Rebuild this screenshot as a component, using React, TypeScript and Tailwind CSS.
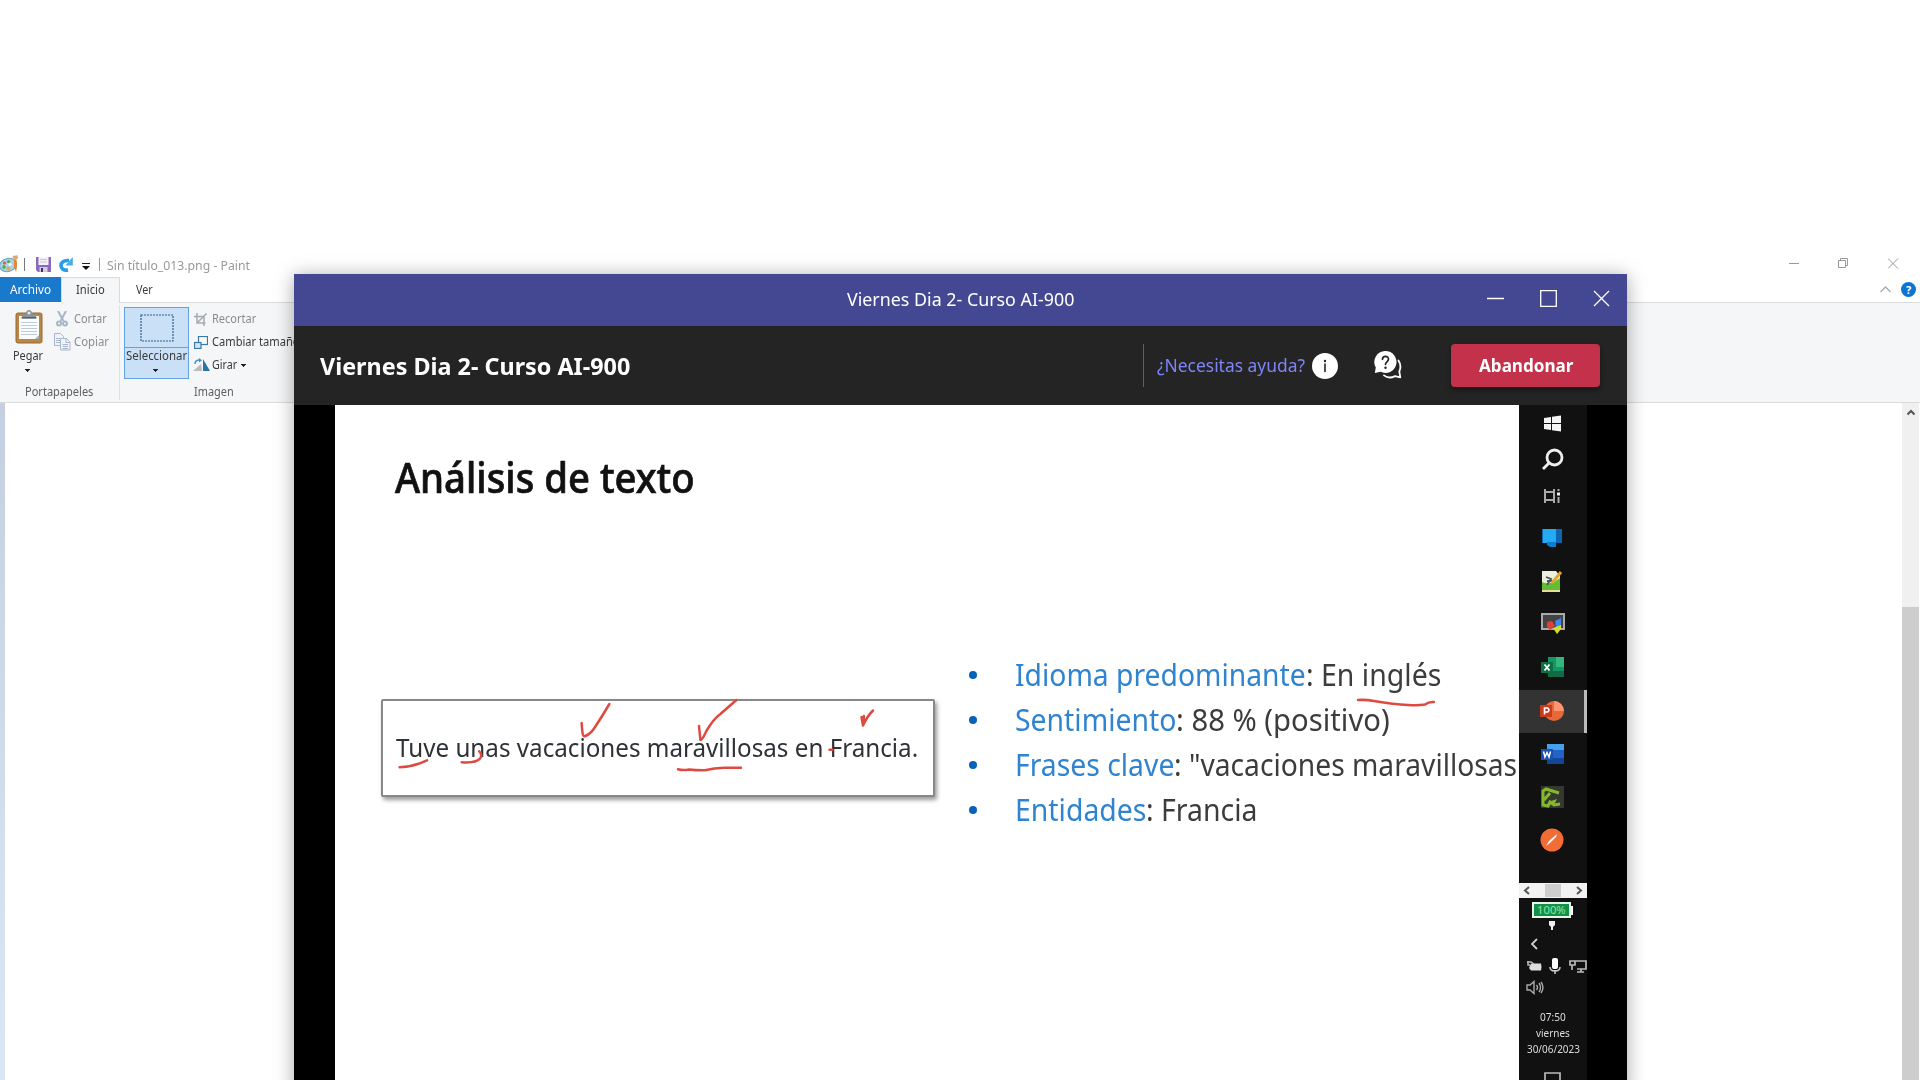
import { useLayoutEffect, useRef, useState, type ReactNode } from "react";

/** One line of text condensed or widened so that it fills `width` pixels. */
function Fit({ width, className = "", children }: { width: number; className?: string; children: ReactNode }) {
  const ref = useRef<HTMLSpanElement>(null);
  const [scale, setScale] = useState(1);
  useLayoutEffect(() => {
    if (ref.current && ref.current.offsetWidth) setScale(width / ref.current.offsetWidth);
  }, [width]);
  return (
    <span className={`block shrink-0 whitespace-nowrap ${className}`} style={{ width }}>
      <span ref={ref} className="inline-block origin-left whitespace-pre" style={{ transform: `scaleX(${scale})` }}>
        {children}
      </span>
    </span>
  );
}

const Caret = ({ className = "" }: { className?: string }) => (
  <svg className={`shrink-0 ${className}`} width="5" height="3" viewBox="0 0 5 3" shapeRendering="crispEdges">
    <path d="M0 0h5L2.5 3z" fill="#222" />
  </svg>
);

const PaintLogo = () => (
  <svg width="19" height="18" viewBox="0 0 19 18">
    <ellipse cx="8" cy="10" rx="8.5" ry="6.5" fill="#a9d3ea" stroke="#6d9fbd" transform="rotate(-15 8 10)" />
    <circle cx="4" cy="12" r="1.8" fill="#4cae3f" />
    <circle cx="4.500" cy="8" r="1.600" fill="#e7574a" />
    <circle cx="8.500" cy="6.500" r="1.600" fill="#4cae3f" />
    <circle cx="8.500" cy="13.500" r="1.900" fill="#f2a737" />
    <circle cx="10" cy="9.500" r="1.600" fill="#fff" />
    <path d="M14 5l2.500-.5.5 7-1 5.500-2-5z" fill="#e8862c" />
    <path d="M12.500 1l5-.8.5 3.300-4 2z" fill="#d8a878" />
  </svg>
);

const SaveIcon = () => (
  <svg width="15" height="15" viewBox="0 0 15 15">
    <path d="M0 0h15v15H2l-2-2z" fill="#8a68bd" />
    <rect x="2.500" y="0" width="10" height="8" fill="#f3f1f8" />
    <path d="M4 2.500h7M4 5h7" stroke="#cbc5d8" />
    <rect x="3.500" y="10" width="8" height="5" fill="#cfcbe0" />
    <rect x="5" y="11" width="2" height="4" fill="#443060" />
  </svg>
);

const UndoIcon = () => (
  <svg width="14" height="15" viewBox="0 0 14 15">
    <path d="M9 13C4.500 13.800 2 11.500 2 8.500s2.500-5.500 8-5" fill="none" stroke="#2b9be3" strokeWidth="3.600" />
    <path d="M13.800 0v8.500H6.500l2.300-2.700L11 3z" fill="#46aeee" />
  </svg>
);

const Clipboard = () => (
  <svg width="28" height="34" viewBox="0 0 28 34">
    <rect x="1" y="3" width="26" height="30" rx="2" fill="#b98647" stroke="#99692f" />
    <rect x="4" y="6" width="20" height="23" fill="#fbfcfd" />
    <path d="M6 12.500h16M6 15.500h16M6 18.500h16M6 21.500h16M6 24.500h16" stroke="#bccbd8" />
    <path d="M20 29l4-4v4z" fill="#a5b3bd" />
    <path d="M7 8.500V5l4-1.500C11 1 12.500 0 14 0s3 1 3 3.500L21 5v3.500z" fill="#8b939a" />
    <path d="M6.500 7h15v1.500h-15z" fill="#5a6269" />
    <circle cx="14" cy="3" r="1.500" fill="#e9edf0" />
  </svg>
);

const Scissors = () => (
  <svg width="12" height="16" viewBox="0 0 12 16" fill="none" stroke="#a9b6c8" strokeWidth="2">
    <path d="M2 0l5.500 10M10 0L4.500 10" />
    <circle cx="3" cy="12.500" r="2" />
    <circle cx="9" cy="12.500" r="2" />
  </svg>
);

const CopyIcon = () => (
  <svg width="17" height="18" viewBox="0 0 17 18" fill="#f0f3f8" stroke="#a8b7cd">
    <path d="M.5.500h6l3 3v9h-9z" />
    <path d="M2 5.500h4M2 7.500h4M2 9.500h4" />
    <path d="M6.500 5.500h6l3.500 3.500v8H6.500z" />
    <path d="M12 5.500v4h4M8.500 11.500h5.500M8.500 13.500h5.500M8.500 15.500h5.500" />
  </svg>
);

const CropIcon = () => (
  <svg width="14" height="13" viewBox="0 0 14 13" fill="none" stroke="#a5abb2" strokeWidth="1.500">
    <path d="M3 0v10h8.500M0 3.500h10V13M3 10L12.500.5" />
  </svg>
);

const ResizeIcon = () => (
  <svg width="14" height="13" viewBox="0 0 14 13" stroke="#3a78a5">
    <rect x="4.500" y=".5" width="9" height="8" fill="#f6fafd" strokeWidth="1.200" />
    <rect x=".5" y="6.500" width="6.500" height="6" fill="#d0e5f4" strokeWidth="1.200" />
  </svg>
);

const RotateIcon = () => (
  <svg width="17" height="14" viewBox="0 0 17 14">
    <path d="M9 13L0 13 8 6z" fill="#b9bdc1" />
    <path d="M10 1l7 12h-7z" fill="#2576aa" />
    <path d="M2 6C2 3 4 1.800 6.500 2" fill="none" stroke="#3a95d8" strokeWidth="1.500" />
    <path d="M6 0l3 2.200L6 4.500z" fill="#3a95d8" />
  </svg>
);

function Ribbon() {
  return (
    <div className="flex h-[100px] border-b border-[#dadbdc] bg-[#f5f6f7] text-[12px] leading-4 text-[#3b3b3b]">
      <div className="my-[2px] flex w-[120px] shrink-0 flex-col border-r border-[#dfe1e3]">
        <div className="flex h-[74px]">
          <div className="flex w-[54px] flex-col pl-[13px] pt-[5px]">
            <span className="ml-[2px]"><Clipboard /></span>
            <Fit width={30} className="mt-[4px]">Pegar</Fit>
            <Caret className="ml-[12px] mt-[5px]" />
          </div>
          <div className="flex flex-col pt-[6px] text-[#8d8d8d]">
            <div className="flex h-[16px] items-center">
              <span className="ml-[2px] w-[18px]"><Scissors /></span>
              <Fit width={33}>Cortar</Fit>
            </div>
            <div className="mt-[7px] flex h-[16px] items-center">
              <span className="w-[20px]"><CopyIcon /></span>
              <Fit width={35}>Copiar</Fit>
            </div>
          </div>
        </div>
        <Fit width={68} className="ml-[25px] mt-[5px] text-[#5f5f5f]">Portapapeles</Fit>
      </div>
      <div className="flex flex-1 flex-col pl-[4px] pt-[4px]">
        <div className="flex h-[72px]">
          <div className="flex h-[72px] w-[65px] flex-col border border-[#62a2e4] bg-[#c9e0f7]">
            <div className="flex h-[40px] items-center justify-center border-b border-[#62a2e4]">
              <svg width="34" height="28" viewBox="0 0 34 28">
                <rect x="1" y="1" width="32" height="26" fill="none" stroke="#2b5f8c" strokeDasharray="2 1" strokeWidth="1.200" />
              </svg>
            </div>
            <Fit width={61} className="ml-px">Seleccionar</Fit>
            <Caret className="ml-[28px] mt-[5px]" />
          </div>
          <div className="ml-[4px] flex flex-col gap-[7px] pt-[4px]">
            <div className="flex h-[16px] items-center text-[#8d8d8d]">
              <span className="w-[19px] pl-px"><CropIcon /></span>
              <Fit width={44}>Recortar</Fit>
            </div>
            <div className="flex h-[16px] items-center">
              <span className="w-[19px] pl-px"><ResizeIcon /></span>
              <Fit width={88}>Cambiar tamaño</Fit>
            </div>
            <div className="flex h-[16px] items-center">
              <span className="w-[19px]"><RotateIcon /></span>
              <Fit width={25}>Girar</Fit>
              <Caret className="ml-[4px]" />
            </div>
          </div>
        </div>
        <Fit width={40} className="ml-[70px] mt-[5px] text-[#5f5f5f]">Imagen</Fit>
      </div>
    </div>
  );
}

function PaintWindow() {
  return (
    <div className="flex h-[1080px] flex-col pt-[247px] font-['Noto_Sans',sans-serif] text-[12px] leading-4">
      <div className="flex h-[30px] items-start">
        <span className="mt-[8px] w-[24px]"><PaintLogo /></span>
        <span className="mt-[11px] h-[13px] w-px bg-[#777]" />
        <span className="ml-[11px] mt-[10px]"><SaveIcon /></span>
        <span className="ml-[8px] mt-[10px]"><UndoIcon /></span>
        <svg className="ml-[9px] mt-[16px]" width="8" height="7" viewBox="0 0 8 7">
          <path d="M0 .5h8" stroke="#222" />
          <path d="M0 3h8L4 7z" fill="#111" />
        </svg>
        <span className="ml-[9px] mr-[7px] mt-[11px] h-[13px] w-px bg-[#999]" />
        <Fit width={143} className="mt-[11px] text-[#999]">Sin título_013.png - Paint</Fit>
        <div className="ml-auto flex pr-[21px] pt-[11px] text-[#999]">
          <svg width="11" height="11" fill="none" stroke="currentColor"><path d="M0 5.500h10" /></svg>
          <svg className="ml-[38px]" width="11" height="11" fill="none" stroke="currentColor">
            <path d="M.5 2.500h7v7h-7zM2.500 2V.5h7v7H8" />
          </svg>
          <svg className="ml-[39px]" width="11" height="11" fill="none" stroke="currentColor"><path d="M0 .5l10 10M10 .5l-10 10" /></svg>
        </div>
      </div>
      <div className="flex h-[26px] text-[#3b3b3b]">
        <div className="h-[25px] w-[61px] bg-[#1979ca] pl-[10px] pt-[5px] text-white"><Fit width={41}>Archivo</Fit></div>
        <div className="h-[26px] w-[59px] border border-b-0 border-[#dadbdc] bg-[#f5f6f7] pl-[14px] pt-[4px]"><Fit width={29}>Inicio</Fit></div>
        <div className="flex flex-1 border-b border-[#dadbdc] pl-[16px] pt-[5px]">
          <Fit width={17}>Ver</Fit>
          <div className="ml-auto flex pr-[4px]">
            <svg className="mt-[4px]" width="12" height="7" fill="none" stroke="#aaa" strokeWidth="1.300"><path d="M.5 6l5-5 5 5" /></svg>
            <span className="ml-[9px] flex size-[15px] items-center justify-center rounded-full bg-[#0b75d1] text-[11px] font-bold text-white">?</span>
          </div>
        </div>
      </div>
      <Ribbon />
      <div className="flex flex-1">
        <div className="w-[5px] bg-linear-to-b from-[#c5cfe1] to-[#dce6f4]" />
        <div className="flex-1" />
        <div className="mr-px flex w-[17px] flex-col bg-[#f0f0f0]">
          <svg className="ml-[5px] mt-[6px]" width="8" height="7" fill="none" stroke="#555" strokeWidth="2"><path d="M.5 5.500L4 2l3.500 3.500" /></svg>
          <div className="mt-[191px] flex-1 bg-[#cdcdcd]" />
        </div>
      </div>
    </div>
  );
}

function TitleBar() {
  return (
    <div className="flex h-[52px] items-center bg-[#444791] pr-[17px] text-white">
      <Fit width={227} className="mb-[2px] ml-[553px] text-[18px] leading-[24px]">Viernes Dia 2- Curso AI-900</Fit>
      <div className="ml-auto flex items-center pb-[3px]">
        <svg width="17" height="17" fill="none" stroke="currentColor" strokeWidth="1.500"><path d="M0 8.500h17" /></svg>
        <svg className="ml-[36px]" width="17" height="17" fill="none" stroke="currentColor" strokeWidth="1.300"><path d="M.7.700h15.600v15.600H.7z" /></svg>
        <svg className="ml-[36px]" width="17" height="17" fill="none" stroke="currentColor" strokeWidth="1.300"><path d="M1 1l15 15M16 1L1 16" /></svg>
      </div>
    </div>
  );
}

function MeetingHeader() {
  return (
    <div className="flex h-[79px] items-center bg-[#242424] text-white">
      <Fit width={310} className="ml-[26px] text-[23.500px] font-bold leading-8">Viernes Dia 2- Curso AI-900</Fit>
      <div className="ml-auto flex items-center">
        <div className="h-[43px] w-px bg-[#606060]" />
        <Fit width={148} className="mb-[2px] ml-[13px] text-[18px] leading-6 text-[#7f85f5]">¿Necesitas ayuda?</Fit>
        <svg className="ml-[7px]" width="26" height="26" viewBox="0 0 26 26">
          <circle cx="13" cy="13" r="13" fill="#fff" />
          <circle cx="13" cy="8" r="1.200" fill="#242424" />
          <path d="M13 11v7.500" stroke="#242424" strokeWidth="1.600" strokeLinecap="round" />
        </svg>
        <svg className="mb-[2px] ml-[36px]" width="28" height="28" viewBox="0 0 28 28">
          <path d="M11.500 0a11 11 0 1 1-5 20.800L.8 22l1-5.500A11 11 0 0 1 11.500 0z" fill="#fff" />
          <path d="M8.500 8.300c.2-4 6-3.800 6-.2 0 2.800-3 2.700-3 5.200" fill="none" stroke="#242424" strokeWidth="1.700" strokeLinecap="round" />
          <circle cx="11.500" cy="16.800" r="1.200" fill="#242424" />
          <path d="M24.500 9.500c2.300 3.600 2.500 7.300.8 11l1 5.800-5.300-1.200c-3.800 2-8 1.600-11-.7" fill="none" stroke="#fff" strokeWidth="1.800" strokeLinejoin="round" strokeLinecap="round" />
        </svg>
        <div className="ml-[49px] mr-[27px] flex h-[43px] w-[149px] items-center justify-center rounded-[4px] bg-[#c4314b] shadow-[0_3px_5px_rgba(0,0,0,0.4)]">
          <Fit width={94} className="mb-[2px] text-[18px] font-bold leading-6">Abandonar</Fit>
        </div>
      </div>
    </div>
  );
}

type Item = { label: string; labelWidth: number; value: string; valueWidth: number };
const ITEMS: Item[] = [
  { label: "Idioma predominante", labelWidth: 291, value: ": En inglés", valueWidth: 135 },
  { label: "Sentimiento", labelWidth: 161, value: ": 88 % (positivo)", valueWidth: 214 },
  { label: "Frases clave", labelWidth: 159, value: ": \"vacaciones maravillosas", valueWidth: 343 },
  { label: "Entidades", labelWidth: 131, value: ": Francia", valueWidth: 111 },
];

function Slide() {
  return (
    <div className="relative flex w-[1184px] shrink-0 flex-col overflow-hidden bg-white">
      <Fit width={300} className="ml-[60px] mt-[43px] text-[42px] font-medium leading-[58px] text-[#111] blur-[0.4px] [-webkit-text-stroke:0.7px_#111]">Análisis de texto</Fit>
      <div className="mt-[147px] flex blur-[0.4px]">
        <div className="ml-[46px] mt-[46px] h-[98px] w-[554px] shrink-0 rounded-[2px] border-2 border-[#888] bg-white pl-[13px] shadow-[2px_3px_4px_rgba(0,0,0,0.4)]">
          <Fit width={522} className="mt-[26px] text-[26px] leading-[40px] text-[#2e3136]">Tuve unas vacaciones maravillosas en Francia.</Fit>
        </div>
        <ul className="ml-[34px]">
          {ITEMS.map((i) => (
            <li key={i.label} className="flex h-[44.8px] items-center text-[31px] leading-[44px] text-[#3c3c3c]">
              <span className="mr-[38px] size-[8px] shrink-0 rounded-full bg-[#0862b8]" />
              <Fit width={i.labelWidth} className="mb-[2px] text-[#2f83cf]">{i.label}</Fit>
              <Fit width={i.valueWidth} className="mb-[2px]">{i.value}</Fit>
            </li>
          ))}
        </ul>
      </div>
      <svg className="absolute left-0 top-0" width="1184" height="675" viewBox="335 405 1184 675" fill="none" stroke="#df4a40" strokeWidth="2.500" strokeLinecap="round" strokeLinejoin="round">
        <path d="M581.600 723l.8 9q.5 5 3 4 5-2 9-8 8-12 15-24" />
        <path d="M699 726l1.400 14q2 0 6-9 7-12 14-17l16-14" />
        <path d="M861.500 717l1.500 8.500q4-9 10-15M864 716l-1 9" />
        <path d="M399.600 767.300q14-.5 27.400-7" />
        <path d="M461.700 762.300q14 1 18.500-4 2.500-3-1-7" />
        <path d="M678 769.300q5 1.500 11 .2 8 1 16 .8 10-2.800 20-2.600h16" />
        <path d="M829.500 749.700h3" />
        <path d="M1358 700q8-.5 16 1 20 3.500 34 4 10 .8 17-.5 4-3 9-2.500" />
      </svg>
    </div>
  );
}

function Taskbar() {
  return (
    <div className="relative flex w-[68px] shrink-0 flex-col overflow-hidden bg-[#111] text-[#ddd]">
      <div className="flex h-[478px] shrink-0 flex-col blur-[0.7px]">
        <svg className="ml-[25px] mt-[10px] shrink-0" width="17" height="17" viewBox="0 0 17 17" fill="#f4f4f4">
          <path d="M0 3l7-1v6H0zM8 1.800L17 .5V8H8zM0 9h7v6l-7-1zM8 9h9v7.500L8 15.200z" />
        </svg>
        <svg className="ml-[22px] mt-[16px] shrink-0" width="24" height="24" viewBox="0 0 24 24" fill="none" stroke="#eee" strokeWidth="2.800">
          <circle cx="13.500" cy="9.500" r="7.500" /><path d="M8 15l-6 6" />
        </svg>
        <svg className="ml-[25px] mt-[16px] shrink-0" width="17" height="16" viewBox="0 0 17 16" fill="none" stroke="#aaa" strokeWidth="2">
          <path d="M1 1v3h9V1M1 15v-3h9v3M1 4v8M10 4v8M14.500 1v2M14.500 9v6" /><path d="M13 6h3" stroke="#eee" strokeWidth="3" />
        </svg>
        <svg className="ml-[23px] mt-[24px] shrink-0" width="21" height="20" viewBox="0 0 21 20">
          <path d="M0 1h20v14H0z" fill="#0d64b1" /><path d="M1 1h13v14H1z" fill="#25a9f2" /><path d="M5 14h9v5H8l-3-2z" fill="#087ed0" />
        </svg>
        <svg className="ml-[23px] mt-[22px] shrink-0" width="21" height="24" viewBox="0 0 21 24">
          <path d="M0 1h14l4 5v16H0z" fill="#e8f1df" /><path d="M0 12q8 4 18-4v14H0z" fill="#62bd32" /><path d="M4 7l5 2-4 6M5 11h7" stroke="#555" strokeWidth="1.800" fill="none" /><path d="M10 13L19 2" stroke="#e5a42d" strokeWidth="3" /><path d="M0 21h18" stroke="#e7dba1" strokeWidth="2" />
        </svg>
        <svg className="ml-[22px] mt-[18px] shrink-0" width="24" height="22" viewBox="0 0 24 22">
          <rect x="1" y="2" width="22" height="15" fill="#444" stroke="#aaa" strokeWidth="2" /><path d="M6 10l5-1 3 5-5 4-3-3z" fill="#e33f31" /><path d="M14 9l6-3v8l-5 2z" fill="#4385ef" /><path d="M12 16l8-3v4l-4 5z" fill="#d3df28" />
        </svg>
        <svg className="ml-[22px] mt-[23px] shrink-0" width="23" height="21" viewBox="0 0 23 21">
          <path d="M7 0h16v20H7z" fill="#159765" /><path d="M15 0h8v10h-8z" fill="#35b77b" /><path d="M7 14h16v6H7z" fill="#126b44" /><path d="M0 5h12v11H0z" fill="#0d7043" /><path d="M3.500 7.500l5 6m0-6l-5 6" stroke="#fff" strokeWidth="1.800" />
        </svg>
        <div className="mt-[12px] h-[43px] shrink-0 border-r-[3px] border-[#bbb] bg-[#333] pl-[21px] pt-[10px]">
          <svg width="24" height="22" viewBox="0 0 24 22">
            <circle cx="14" cy="11" r="10" fill="#e96839" /><path d="M14 1a10 10 0 0 1 10 10H14z" fill="#ff9470" /><path d="M0 5h12v12H0z" fill="#c83c1d" /><path d="M4.500 14.500V8h3q3 1.800 0 4h-3" fill="none" stroke="#fff" strokeWidth="1.600" />
          </svg>
        </div>
        <svg className="ml-[22px] mt-[11px] shrink-0" width="23" height="21" viewBox="0 0 23 21">
          <path d="M6 0h17v20H6z" fill="#2462c7" /><path d="M6 0h17v6H6z" fill="#45a0ed" /><path d="M6 14h17v6H6z" fill="#144697" /><path d="M0 5h12v11H0z" fill="#1850b0" /><path d="M2.500 7.500L4 13l2-4.500L8 13l1.500-5.500" fill="none" stroke="#fff" strokeWidth="1.500" />
        </svg>
        <svg className="ml-[22px] mt-[21px] shrink-0" width="23" height="23" viewBox="0 0 23 23">
          <path d="M0 0h23v22H0z" fill="#35382f" /><path d="M18 7L5 3 2 5v14l5 1 2-4 4 3 6-1M3 14l6-7" fill="none" stroke="#85b82d" strokeWidth="3" /><path d="M10 15l6-2-3 6z" fill="#85b82d" />
        </svg>
        <svg className="ml-[21px] mt-[19px] shrink-0" width="24" height="24" viewBox="0 0 24 24">
          <circle cx="12" cy="12" r="11.500" fill="#f26c35" /><path d="M6 18l3-5 8-7-1 3-6 6z" fill="#fff" />
        </svg>
      </div>
      <div className="flex h-[15px] shrink-0 items-center bg-[#f2f2f2]">
        <svg className="ml-[4px]" width="7" height="9" fill="none" stroke="#555" strokeWidth="2"><path d="M6 1L2 4.500 6 8" /></svg>
        <div className="ml-[15px] h-[13px] w-[16px] bg-[#cdcdcd]" />
        <svg className="ml-[15px]" width="7" height="9" fill="none" stroke="#555" strokeWidth="2"><path d="M1 1l4 3.500L1 8" /></svg>
      </div>
      <div className="flex h-[182px] shrink-0 flex-col font-['Noto_Sans',sans-serif] blur-[0.5px]">
        <div className="flex shrink-0 items-center pl-[13px] pt-[4px]">
          <div className="flex h-[16px] w-[39px] items-center justify-center border-2 border-[#e8f5ea] bg-[#139047] text-[#8fe5a9]">
            <Fit width={29} className="text-[10.500px] leading-3">100%</Fit>
          </div>
          <div className="h-[9px] w-[2px] bg-white" />
        </div>
        <svg className="ml-[29px] mt-[2px] shrink-0" width="8" height="10" fill="#eee"><path d="M1 1h6v4L5 7v3H3V7L1 5z" /></svg>
        <svg className="ml-[11px] mt-[8px] shrink-0" width="9" height="12" fill="none" stroke="#ccc" strokeWidth="1.800"><path d="M7 1L2 6l5 5" /></svg>
        <div className="mt-[7px] flex h-[18px] shrink-0 items-center pl-[7px]">
          <svg className="shrink-0" width="17" height="14" viewBox="0 0 17 14"><path d="M5 4.500h10q1 3.500 0 7H5L3 9z" fill="#ddd" /><path d="M1 3h4l3 2M2 2v4h2" fill="none" stroke="#bbb" strokeWidth="1.500" /></svg>
          <svg className="ml-[6px] shrink-0" width="12" height="18" viewBox="0 0 12 18"><rect x="3" y="1" width="6" height="11" rx="2" fill="#fff" /><path d="M1 10q0 4 5 4t5-4M6 13v4" fill="none" stroke="#ccc" strokeWidth="1.500" /></svg>
          <svg className="ml-[8px] shrink-0" width="19" height="15" viewBox="0 0 19 15" fill="none" stroke="#bbb" strokeWidth="1.700"><path d="M6 2h11v8H8M1 2h5v4H1zM3 6v5M8 13h7M12 10v3" /></svg>
        </div>
        <svg className="ml-[7px] mt-[5px] shrink-0" width="18" height="15" viewBox="0 0 18 15" fill="none" stroke="#aaa" strokeWidth="1.400"><path d="M1 5h3l4-3.500v12L4 10H1zM10.500 5q2 2.500 0 5M13 3q3 4.500 0 9M15 2q4 5.500 0 11" /></svg>
        <div className="mt-[14px] flex shrink-0 flex-col items-center text-[10.500px] leading-[16px] text-[#ddd]">
          <Fit width={26}>07:50</Fit>
          <Fit width={34}>viernes</Fit>
          <Fit width={53}>30/06/2023</Fit>
        </div>
        <svg className="ml-[25px] mt-[15px] shrink-0" width="17" height="16" fill="none" stroke="#bbb" strokeWidth="1.700"><path d="M1 1h15v11H1z" /></svg>
      </div>
    </div>
  );
}

export default function App() {
  return (
    <div className="relative h-[1080px] w-[1920px] overflow-hidden bg-white">
      <PaintWindow />
      <div className="absolute left-[294px] top-[274px] flex h-[820px] w-[1333px] flex-col bg-black font-['Noto_Sans',sans-serif] shadow-[0_2px_18px_rgba(0,0,0,0.35)]">
        <TitleBar />
        <MeetingHeader />
        <div className="flex h-[675px] shrink-0 pl-[41px]">
          <Slide />
          <Taskbar />
        </div>
      </div>
    </div>
  );
}
